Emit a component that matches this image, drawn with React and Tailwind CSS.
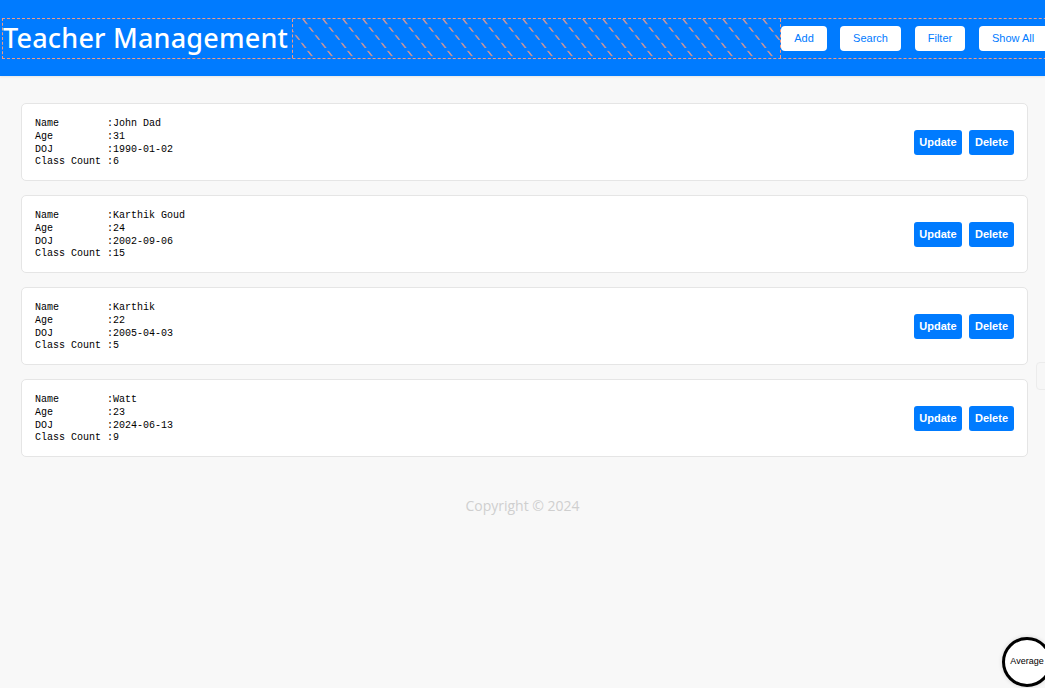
import React from 'react';

const teachers = [
  { name: 'John Dad', age: 31, doj: '1990-01-02', count: 6 },
  { name: 'Karthik Goud', age: 24, doj: '2002-09-06', count: 15 },
  { name: 'Karthik', age: 22, doj: '2005-04-03', count: 5 },
  { name: 'Watt', age: 23, doj: '2024-06-13', count: 9 },
];

const Hatch = () => (
  <svg className="absolute inset-0 w-full h-full" preserveAspectRatio="none">
    <defs>
      <pattern id="hatch" width="20" height="40" patternUnits="userSpaceOnUse" patternTransform="skewX(38)">
        <line x1="10" y1="0" x2="10" y2="40" stroke="#f29a85" strokeWidth="1.6" strokeDasharray="5 3" />
      </pattern>
    </defs>
    <rect width="100%" height="100%" fill="url(#hatch)" />
  </svg>
);

const HeaderButton = ({ children, className = '' }) => (
  <button className={`h-[25px] shrink-0 rounded-[4px] bg-white text-[#007bff] text-[11px] font-medium ${className}`}>
    {children}
  </button>
);

const TeacherCard = ({ t }) => (
  <div className="flex items-center justify-between h-[78px] bg-white border border-[#e5e5e5] rounded-[5px] pl-[13px] pr-[13px]">
    <pre className="pt-[3px] text-[10px] leading-[12.7px] text-black" style={{ fontFamily: '"Liberation Mono", "DejaVu Sans Mono", monospace' }}>
{`Name        :${t.name}
Age         :${t.age}
DOJ         :${t.doj}
Class Count :${t.count}`}
    </pre>
    <div className="flex gap-[7px]">
      <button className="h-[25px] w-[48px] rounded-[3px] bg-[#007bff] text-white text-[11px] font-bold">Update</button>
      <button className="h-[25px] w-[45px] rounded-[3px] bg-[#007bff] text-white text-[11px] font-bold">Delete</button>
    </div>
  </div>
);

export default function App() {
  return (
    <div className="relative min-h-[688px] w-[1045px] overflow-hidden bg-[#f8f8f8]" style={{ fontFamily: '"Liberation Sans", Arial, sans-serif' }}>
      <header className="h-[76px] bg-[#007bff] shadow-[0_1px_2px_rgba(0,0,0,0.08)] pt-[18px] overflow-hidden">
        <div className="flex items-center h-[41px] ml-[2px] w-[1200px] border border-dashed border-[#f29a85]">
          <div className="h-full w-[290px] shrink-0 border-r border-dashed border-[#f29a85] flex items-center overflow-hidden">
            <h1 className="text-white text-[27px] font-medium tracking-[0.2px] whitespace-nowrap" style={{ fontFamily: '"Noto Sans", "Open Sans", sans-serif' }}>
              Teacher Management
            </h1>
          </div>
          <div className="relative h-full w-[488px] shrink-0 border-r border-dashed border-[#f29a85]">
            <Hatch />
          </div>
          <div className="flex items-center gap-[13px] whitespace-nowrap">
            <HeaderButton className="w-[46px]">Add</HeaderButton>
            <HeaderButton className="w-[61px]">Search</HeaderButton>
            <HeaderButton className="w-[50px] ml-[1px]">Filter</HeaderButton>
            <HeaderButton className="w-[80px] ml-[1px] text-left pl-[13px]">Show All</HeaderButton>
          </div>
        </div>
      </header>

      <main className="ml-[21px] mr-[17px] mt-[27px] flex flex-col gap-[14px]">
        {teachers.map((t) => (
          <TeacherCard key={t.name} t={t} />
        ))}
      </main>

      <footer className="mt-[38px] text-center text-[14px] text-[#cfcfcf]" style={{ fontFamily: '"Open Sans", Lato, sans-serif' }}>
        Copyright © 2024
      </footer>

      <div className="absolute left-[1036px] top-[362px] h-[28px] w-[20px] rounded-[4px] border border-[#ececec] bg-[#f7f7f7]" />

      <div className="absolute left-[1002px] top-[637px] h-[50px] w-[50px] rounded-full border-[3px] border-black bg-white flex items-center justify-center shadow-[0_0_4px_rgba(0,0,0,0.15)]">
        <span className="text-[9px] text-black">Average</span>
      </div>
    </div>
  );
}
